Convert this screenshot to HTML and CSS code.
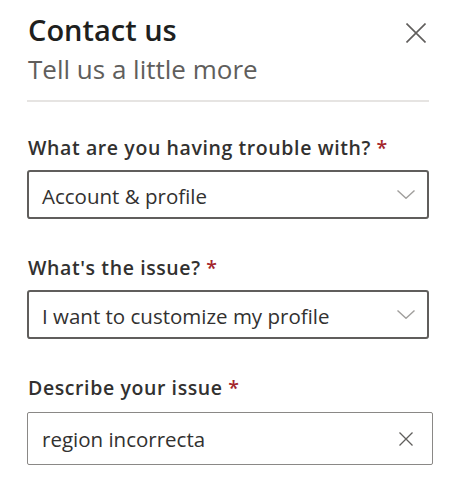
FILE: index.html
```html
<!DOCTYPE html>
<html lang="en">
<head>
    <meta charset="UTF-8">
    <meta name="viewport" content="width=device-width, initial-scale=1.0">
    <title>Contact us</title>
    <link rel="stylesheet" href="styles.css">
</head>
<body>
    <div class="panel">
        <div class="panel-header">
            <div class="heading">
                <h1>Contact us</h1>
                <p class="subtitle">Tell us a little more</p>
            </div>
            <button class="close-button" type="button" aria-label="Close">
                <svg width="20" height="20" viewBox="0 0 20 20">
                    <path d="M0.5 0.5 L19.5 19.5 M19.5 0.5 L0.5 19.5" stroke="#605e5c" stroke-width="1.6" fill="none"/>
                </svg>
            </button>
        </div>

        <form class="contact-form">
            <div class="field">
                <label>What are you having trouble with? <span class="required">*</span></label>
                <div class="select">
                    <span>Account &amp; profile</span>
                    <svg width="18" height="9" viewBox="0 0 18 9">
                        <path d="M0.5 0.5 L9 8.3 L17.5 0.5" stroke="#a19f9d" stroke-width="1.4" fill="none"/>
                    </svg>
                </div>
            </div>

            <div class="field">
                <label>What's the issue? <span class="required">*</span></label>
                <div class="select">
                    <span>I want to customize my profile</span>
                    <svg width="18" height="9" viewBox="0 0 18 9">
                        <path d="M0.5 0.5 L9 8.3 L17.5 0.5" stroke="#a19f9d" stroke-width="1.4" fill="none"/>
                    </svg>
                </div>
            </div>

            <div class="field">
                <label for="issueText">Describe your issue <span class="required">*</span></label>
                <div class="text-input">
                    <input type="text" id="issueText" value="region incorrecta">
                    <svg width="14" height="14" viewBox="0 0 14 14">
                        <path d="M0.5 0.5 L13.5 13.5 M13.5 0.5 L0.5 13.5" stroke="#605e5c" stroke-width="1.3" fill="none"/>
                    </svg>
                </div>
            </div>
        </form>
    </div>
</body>
</html>
```

FILE: styles.css
```css
body {
    font-family: 'Open Sans', 'Noto Sans', sans-serif;
    background-color: #ffffff;
    margin: 0;
    color: #323130;
}
.panel {
    width: 402px;
    padding: 13px 0 0 27px;
}
.panel-header {
    display: flex;
    justify-content: space-between;
    align-items: flex-start;
    padding-left: 1px;
    padding-bottom: 15px;
    border-bottom: 2px solid #e6e4e2;
}
h1 {
    margin: 0;
    font-size: 29px;
    font-weight: 600;
    line-height: 34px;
    color: #201f1e;
}
.subtitle {
    margin: 6px 0 0;
    font-size: 26px;
    line-height: 32px;
    color: #605e5c;
}
.close-button {
    background: none;
    border: none;
    padding: 0;
    margin: 10px 3px 0 0;
    cursor: pointer;
    width: 20px;
    height: 20px;
}
.contact-form {
    padding-top: 34px;
}
.field {
    margin-bottom: 37px;
}
label {
    display: block;
    font-size: 19.5px;
    font-weight: 600;
    letter-spacing: 0.6px;
    line-height: 24px;
    color: #323130;
    padding-left: 1px;
    margin-bottom: 10px;
}
.required {
    color: #a4262c;
}
.select {
    display: flex;
    align-items: center;
    justify-content: space-between;
    height: 49px;
    box-sizing: border-box;
    border: 2px solid #605e5c;
    border-radius: 3px;
    padding: 3px 12px 0 13px;
    font-size: 20.5px;
    color: #323130;
}
.select svg {
    margin-top: -3px;
}
.text-input {
    display: flex;
    align-items: center;
    width: 406px;
    height: 53px;
    margin-top: 12px;
    box-sizing: border-box;
    border: 1.5px solid #8a8886;
    border-radius: 2px;
    padding: 0 19px 0 14px;
}
.field label[for] {
    margin-bottom: 0;
}
.text-input input {
    flex: 1;
    border: none;
    outline: none;
    padding: 0;
    font-family: inherit;
    font-size: 20.5px;
    color: #323130;
    background: transparent;
}
```
